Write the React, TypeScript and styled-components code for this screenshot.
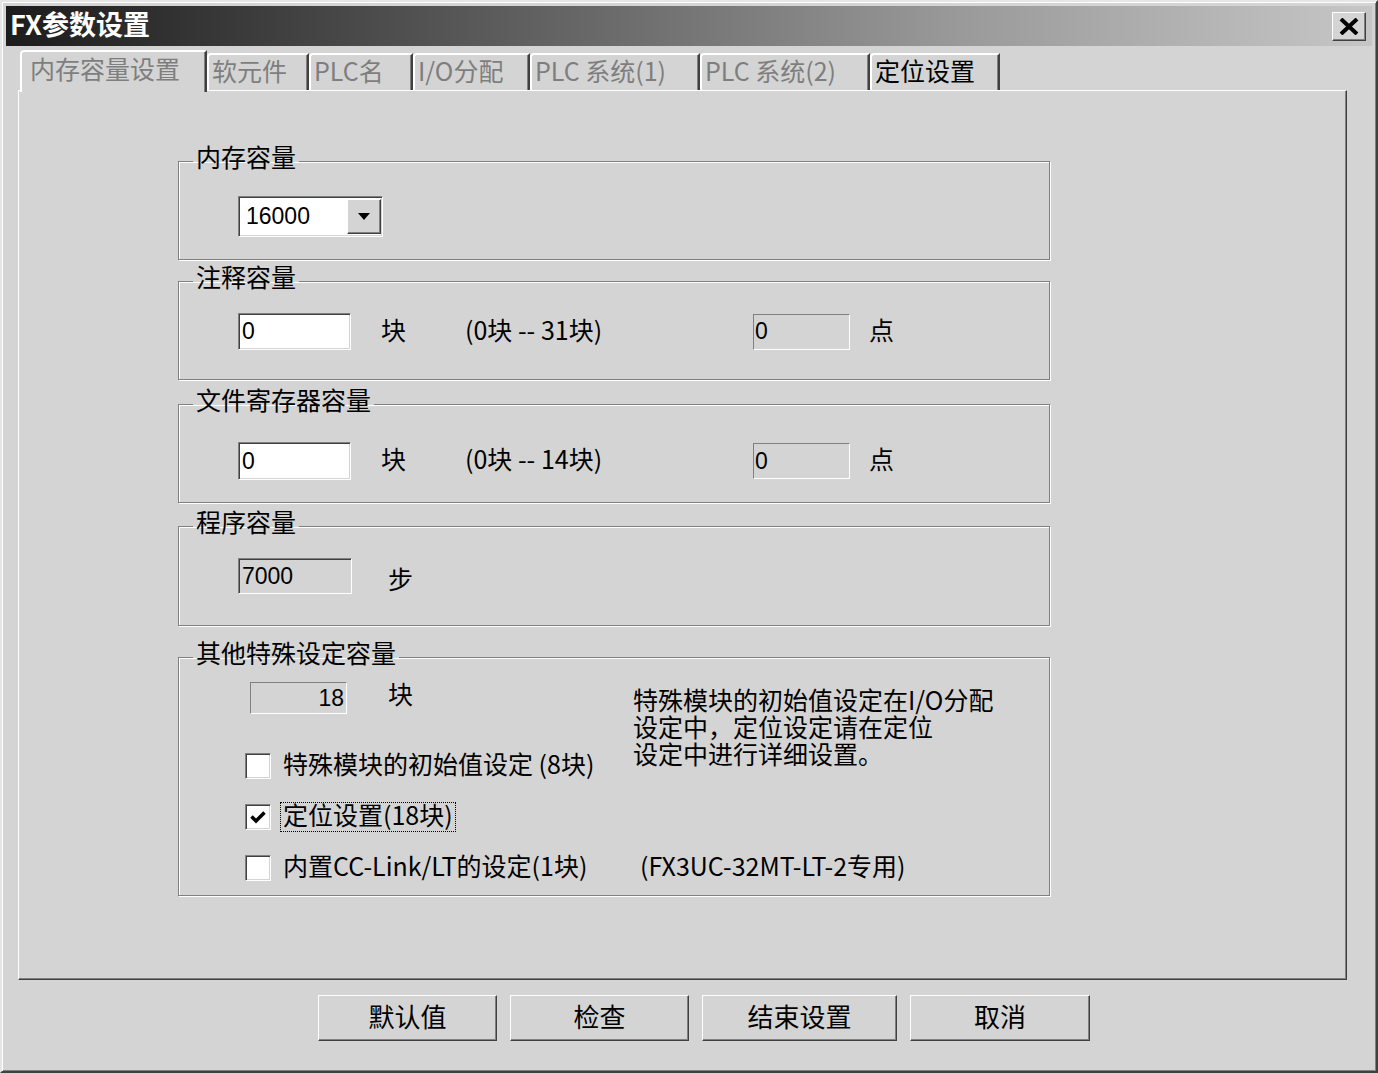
import React from 'react'
import styled, { createGlobalStyle } from 'styled-components'

const FACE = '#d4d4d4'
const CJK = '"Noto Sans CJK SC", "Noto Sans", sans-serif'
const NUM = '"Liberation Sans", "Noto Sans CJK SC", sans-serif'

const GlobalStyle = createGlobalStyle`
	html, body {
		margin: 0;
		padding: 0;
		background: ${FACE};
	}
	body {
		font-family: ${CJK};
		color: #000;
	}
`

const Window = styled.div`
	box-sizing: border-box;
	width: 1378px;
	height: 1073px;
	background: ${FACE};
	border-top: 2px solid #e6e6e6;
	border-left: 2px solid #e6e6e6;
	border-right: 2px solid #404040;
	border-bottom: 2px solid #404040;
	box-shadow: inset 1px 1px 0 #fff, inset -1px -1px 0 #808080;
	padding: 4px;
	display: flex;
	flex-direction: column;
`

const TitleBar = styled.div`
	height: 40px;
	flex: none;
	display: flex;
	align-items: center;
	justify-content: space-between;
	padding: 0 6px 0 4px;
	background: linear-gradient(to right, #1c1c1c 0%, #5a5a5a 35%, #9a9a9a 70%, #c6c6c6 100%);
`

const Title = styled.span`
	color: #fff;
	font-family: ${CJK};
	font-weight: 700;
	font-size: 27px;
	line-height: 30px;
	padding-bottom: 4px;
`

const CloseButton = styled.div`
	box-sizing: border-box;
	width: 34px;
	height: 29px;
	background: ${FACE};
	border-top: 1px solid #fff;
	border-left: 1px solid #fff;
	border-right: 1px solid #404040;
	border-bottom: 1px solid #404040;
	box-shadow: inset -1px -1px 0 #808080;
	display: flex;
	align-items: center;
	justify-content: center;
`

const Body = styled.div`
	flex: 1;
	display: flex;
	flex-direction: column;
	padding: 4px 25px 0 12px;
`

const TabStrip = styled.div`
	height: 40px;
	display: flex;
	align-items: flex-end;
	padding-left: 2px;
	position: relative;
	z-index: 1;
`

const Tab = styled.div<{ $w: number; $active?: boolean; $dim?: boolean }>`
	box-sizing: border-box;
	width: ${(p) => p.$w}px;
	height: ${(p) => (p.$active ? 42 : 37)}px;
	margin-bottom: ${(p) => (p.$active ? -2 : 0)}px;
	background: ${FACE};
	border-top: 2px solid #fff;
	border-left: 2px solid #fff;
	border-right: 2px solid #404040;
	border-top-left-radius: 4px;
	box-shadow: inset -1px 0 0 #808080;
	padding-left: ${(p) => (p.$active ? 8 : 3)}px;
	padding-bottom: ${(p) => (p.$active ? 9 : 6)}px;
	display: flex;
	align-items: center;
	font-size: 25px;
	white-space: nowrap;
	color: ${(p) => (p.$dim ? '#7e7e7e' : '#000')};
`

const Panel = styled.div`
	box-sizing: border-box;
	height: 890px;
	flex: none;
	border-top: 1px solid #fff;
	border-left: 1px solid #fff;
	border-right: 1px solid #404040;
	border-bottom: 1px solid #404040;
	box-shadow: inset -1px -1px 0 #808080;
	padding: 55px 0 0 159px;
	display: flex;
	flex-direction: column;
`

const Group = styled.fieldset<{ $h: number; $mt?: number }>`
	box-sizing: border-box;
	width: 872px;
	height: ${(p) => p.$h}px;
	margin: ${(p) => p.$mt ?? 0}px 0 0 0;
	padding: 0;
	min-inline-size: 0;
	border: 1px solid #808080;
	box-shadow: inset 1px 1px 0 #fff, 1px 1px 0 #fff;
`

const Caption = styled.legend`
	margin-left: 14px;
	padding: 0 3px 9px 3px;
	font-size: 25px;
	line-height: 21px;
	white-space: nowrap;
`

const GroupBody = styled.div<{ $pt: number; $pl?: number }>`
	padding: ${(p) => p.$pt}px 0 0 ${(p) => p.$pl ?? 59}px;
`

const RangeRow = styled.div`
	display: grid;
	grid-template-columns: 143px 84px 288px 116px auto;
	align-items: center;
	font-size: 25px;
	white-space: nowrap;
`

const Row = styled.div<{ $gap: number }>`
	display: flex;
	align-items: center;
	gap: ${(p) => p.$gap}px;
	font-size: 25px;
`

const Text = styled.span<{ $dy?: number }>`
	font-size: 25px;
	line-height: 30px;
	position: relative;
	top: ${(p) => p.$dy ?? -3}px;
`

const Edit = styled.div<{ $w: number; $h: number; $white?: boolean; $right?: boolean }>`
	box-sizing: border-box;
	width: ${(p) => p.$w}px;
	height: ${(p) => p.$h}px;
	background: ${(p) => (p.$white ? '#fff' : FACE)};
	border-top: 1px solid #808080;
	border-left: 1px solid #808080;
	border-right: 1px solid #fff;
	border-bottom: 1px solid #fff;
	box-shadow: inset 1px 1px 0 #404040, inset -1px -1px 0 ${FACE};
	display: flex;
	align-items: center;
	justify-content: ${(p) => (p.$right ? 'flex-end' : 'flex-start')};
	padding: 0 3px;
	font-family: ${NUM};
	font-size: 23px;
`

const StaticEdit = styled.div<{ $w: number; $h: number; $right?: boolean }>`
	box-sizing: border-box;
	width: ${(p) => p.$w}px;
	height: ${(p) => p.$h}px;
	background: ${FACE};
	border-top: 1px solid #808080;
	border-left: 1px solid #808080;
	border-right: 1px solid #fff;
	border-bottom: 1px solid #fff;
	display: flex;
	align-items: center;
	justify-content: ${(p) => (p.$right ? 'flex-end' : 'flex-start')};
	padding: 0 2px 0 1px;
	font-family: ${NUM};
	font-size: 23px;
`

const Combo = styled.div`
	box-sizing: border-box;
	width: 145px;
	height: 41px;
	background: #fff;
	border-top: 1px solid #808080;
	border-left: 1px solid #808080;
	border-right: 1px solid #fff;
	border-bottom: 1px solid #fff;
	box-shadow: inset 1px 1px 0 #404040, inset -1px -1px 0 ${FACE};
	display: flex;
	align-items: center;
	justify-content: space-between;
	padding: 2px 1px 2px 7px;
	font-family: ${NUM};
	font-size: 23px;
`

const DropButton = styled.div`
	box-sizing: border-box;
	width: 34px;
	height: 35px;
	background: ${FACE};
	border-top: 1px solid #fff;
	border-left: 1px solid #fff;
	border-right: 1px solid #404040;
	border-bottom: 1px solid #404040;
	box-shadow: inset -1px -1px 0 #808080;
	display: flex;
	align-items: center;
	justify-content: center;
`

const SpecialGrid = styled.div`
	display: grid;
	grid-template-columns: 388px auto;
	grid-template-rows: 32px 26px 51px 51px 51px;
	padding: 10px 0 0 66px;
	font-size: 25px;
	white-space: nowrap;
`

const CountCell = styled.div`
	grid-column: 1;
	grid-row: 1;
	display: flex;
	align-items: center;
	padding-left: 5px;
	gap: 41px;
`

const Note = styled.div`
	grid-column: 2;
	grid-row: 1 / 4;
	margin-top: 4px;
	font-size: 25px;
`

const NoteLine = styled.div`
	height: 27px;
	line-height: 26px;
`

const CheckRow = styled.label<{ $row: number }>`
	grid-column: 1;
	grid-row: ${(p) => p.$row};
	display: flex;
	align-items: center;
	gap: 12px;
`

const Extra = styled.div`
	grid-column: 2;
	grid-row: 5;
	display: flex;
	align-items: center;
	padding-left: 7px;
`

const Box = styled.span`
	box-sizing: border-box;
	width: 26px;
	height: 26px;
	flex: none;
	background: #fff;
	border-top: 1px solid #808080;
	border-left: 1px solid #808080;
	border-right: 1px solid #fff;
	border-bottom: 1px solid #fff;
	box-shadow: inset 1px 1px 0 #404040, inset -1px -1px 0 ${FACE};
	display: flex;
	align-items: center;
	justify-content: center;
`

const Focus = styled.span`
	border: 1px dotted #000;
	margin-left: -3px;
	padding: 0 2px 5px 2px;
	line-height: 23px;
`

const ButtonRow = styled.div`
	display: flex;
	gap: 13px;
	padding: 15px 0 0 300px;
`

const Button = styled.div<{ $w: number }>`
	box-sizing: border-box;
	width: ${(p) => p.$w}px;
	height: 46px;
	padding-bottom: 6px;
	background: ${FACE};
	border-top: 1px solid #fff;
	border-left: 1px solid #fff;
	border-right: 1px solid #404040;
	border-bottom: 1px solid #404040;
	box-shadow: inset -1px -1px 0 #808080;
	display: flex;
	align-items: center;
	justify-content: center;
	font-size: 26px;
`

const Check = ({ on }: { on?: boolean }) => (
	<Box>
		{on && (
			<svg width="16" height="14" viewBox="0 0 16 14">
				<path d="M1.5 6.5 L6 11 L14.5 2.5" fill="none" stroke="#000" strokeWidth="3.5" />
			</svg>
		)}
	</Box>
)

const tabs = [
	{ label: '内存容量设置', w: 187, active: true, dim: true },
	{ label: '软元件', w: 102, dim: true },
	{ label: 'PLC名', w: 104, dim: true },
	{ label: 'I/O分配', w: 117, dim: true },
	{ label: 'PLC 系统(1)', w: 170, dim: true },
	{ label: 'PLC 系统(2)', w: 170, dim: true },
	{ label: '定位设置', w: 130 },
]

const App = () => {
	return (
		<>
			<GlobalStyle />
			<Window>
				<TitleBar>
					<Title>FX参数设置</Title>
					<CloseButton>
						<svg width="20" height="17" viewBox="0 0 20 17">
							<path d="M2 1 L18 16 M18 1 L2 16" stroke="#000" strokeWidth="4" />
						</svg>
					</CloseButton>
				</TitleBar>

				<Body>
					<TabStrip>
						{tabs.map((t) => (
							<Tab key={t.label} $w={t.w} $active={t.active} $dim={t.dim}>
								{t.label}
							</Tab>
						))}
					</TabStrip>

					<Panel>
						<Group $h={114}>
							<Caption>内存容量</Caption>
							<GroupBody $pt={20}>
								<Combo>
									<span>16000</span>
									<DropButton>
										<svg width="12" height="7" viewBox="0 0 12 7">
											<polygon points="0,0 12,0 6,7" fill="#000" />
										</svg>
									</DropButton>
								</Combo>
							</GroupBody>
						</Group>

						<Group $h={114} $mt={6}>
							<Caption>注释容量</Caption>
							<GroupBody $pt={17}>
								<RangeRow>
									<Edit $w={113} $h={37} $white>0</Edit>
									<Text>块</Text>
									<Text>(0块 -- 31块)</Text>
									<StaticEdit $w={97} $h={36}>0</StaticEdit>
									<Text>点</Text>
								</RangeRow>
							</GroupBody>
						</Group>

						<Group $h={114} $mt={9}>
							<Caption>文件寄存器容量</Caption>
							<GroupBody $pt={23}>
								<RangeRow>
									<Edit $w={113} $h={38} $white>0</Edit>
									<Text>块</Text>
									<Text>(0块 -- 14块)</Text>
									<StaticEdit $w={97} $h={36}>0</StaticEdit>
									<Text>点</Text>
								</RangeRow>
							</GroupBody>
						</Group>

						<Group $h={115} $mt={8}>
							<Caption>程序容量</Caption>
							<GroupBody $pt={17}>
								<Row $gap={36}>
									<Edit $w={114} $h={36}>7000</Edit>
									<Text $dy={2}>步</Text>
								</Row>
							</GroupBody>
						</Group>

						<Group $h={254} $mt={16}>
							<Caption>其他特殊设定容量</Caption>
							<SpecialGrid>
								<CountCell>
									<StaticEdit $w={97} $h={32} $right>18</StaticEdit>
									<Text $dy={-5}>块</Text>
								</CountCell>
								<Note>
									<NoteLine>特殊模块的初始值设定在I/O分配</NoteLine>
									<NoteLine>设定中，定位设定请在定位</NoteLine>
									<NoteLine>设定中进行详细设置。</NoteLine>
								</Note>
								<CheckRow $row={3}>
									<Check />
									<Text>特殊模块的初始值设定 (8块)</Text>
								</CheckRow>
								<CheckRow $row={4}>
									<Check on />
									<Focus>定位设置(18块)</Focus>
								</CheckRow>
								<CheckRow $row={5}>
									<Check />
									<Text>内置CC-Link/LT的设定(1块)</Text>
								</CheckRow>
								<Extra>
									<Text>(FX3UC-32MT-LT-2专用)</Text>
								</Extra>
							</SpecialGrid>
						</Group>
					</Panel>

					<ButtonRow>
						<Button $w={179}>默认值</Button>
						<Button $w={179}>检查</Button>
						<Button $w={195}>结束设置</Button>
						<Button $w={180}>取消</Button>
					</ButtonRow>
				</Body>
			</Window>
		</>
	)
}

export default App
